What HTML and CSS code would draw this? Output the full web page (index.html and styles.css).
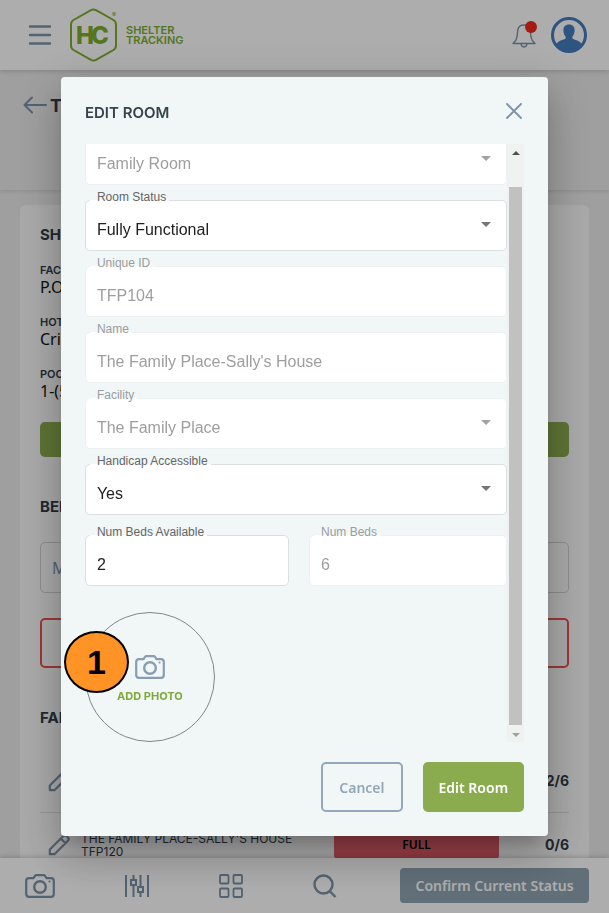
FILE: index.html
```html
<!DOCTYPE html>
<html lang="en">
<head>
<meta charset="utf-8">
<meta name="viewport" content="width=device-width, initial-scale=1">
<title>Shelter Tracking - Edit Room</title>
<link rel="stylesheet" href="styles.css">
</head>
<body>
<svg class="defs" aria-hidden="true">
  <symbol id="camera" viewBox="0 0 30 24">
    <path d="M4 4.200h4.500l1.300-2Q10.500 1.200 11.500 1.200h7q1 0 1.700 1l1.300 2H26q2.800 0 2.800 2.800v13q0 2.800-2.800 2.800H4q-2.800 0-2.800-2.800V7Q1.200 4.200 4 4.200z" fill="none" stroke="currentColor" stroke-width="2.200"/>
    <circle cx="15" cy="13" r="5.800" fill="none" stroke="currentColor" stroke-width="2.400"/>
    <circle cx="24.500" cy="7.500" r="1.100" fill="currentColor"/>
  </symbol>
  <symbol id="pencil" viewBox="0 0 24 24">
    <path d="M2 22v-5L17 2q1.500-1.300 3 0l2 2q1.300 1.500 0 3L7 22zM14 5l5 5" fill="none" stroke="currentColor" stroke-width="2.400" stroke-linejoin="round"/>
  </symbol>
</svg>

<header class="topbar">
  <button class="icon-btn menu" aria-label="Menu"><svg width="24" height="22" viewBox="0 0 24 22"><path d="M2 2.500h20M2 11h20M2 19.500h20" stroke="currentColor" stroke-width="2.400" stroke-linecap="round"/></svg></button>
  <a class="brand" href="#" aria-label="HC Shelter Tracking">
    <svg width="50" height="54" viewBox="0 0 50 54">
      <path d="M22 2.200q2.500-1.300 5 0L44.500 12q2.500 1.500 2.500 4.500v21q0 3-2.500 4.500L27 51.800q-2.500 1.300-5 0L4.500 42Q2 40.500 2 37.500v-21Q2 13.500 4.500 12z" fill="none" stroke="currentColor" stroke-width="2"/>
      <text class="mark" y="36"><tspan x="7">H</tspan><tspan x="22">C</tspan></text>
      <text class="reg" x="43" y="9">®</text>
    </svg>
    <span>SHELTER<br>TRACKING</span>
  </a>
  <button class="icon-btn bell" aria-label="Notifications">
    <svg width="26" height="28" viewBox="0 0 26 28"><path d="M2 22.500q3.500-3 4-6.500l.8-7Q7.500 4 13 4t6.200 5l.8 7q.5 3.500 4 6.500zM10 23q.5 3 3 3t3-3" fill="none" stroke="currentColor" stroke-width="1.400" stroke-linejoin="round"/></svg>
    <i class="dot"></i>
  </button>
  <button class="icon-btn avatar" aria-label="Account">
    <svg width="36" height="36" viewBox="0 0 36 36"><circle cx="18" cy="18" r="16.500" fill="none" stroke="currentColor" stroke-width="3"/><path d="M18 7.500c3.800 0 5.600 2.300 5.600 5.600 0 3-.9 5.200-2.300 6.700-.3 1.800.7 2.300 2.700 2.900 3.500 1 5.500 2 6.300 4.300L31 29Q26 35 18 35T5 29l.7-2c.8-2.300 2.800-3.300 6.300-4.300 2-.6 3-1.100 2.700-2.900-1.400-1.500-2.300-3.700-2.300-6.700 0-3.300 1.800-5.600 5.600-5.600z" fill="currentColor"/></svg>
  </button>
</header>

<section class="titlebar">
  <button class="icon-btn" aria-label="Back"><svg width="24" height="18" viewBox="0 0 24 18"><path d="M23 9H1.500M9 1.500L1.500 9 9 16.500" fill="none" stroke="currentColor" stroke-width="2" stroke-linecap="round" stroke-linejoin="round"/></svg></button>
  <h1>TFP</h1>
</section>

<main class="card">
  <h2>SHELTER</h2>
  <dl class="info">
    <dt>FACILITY</dt><dd>P.O. Box</dd>
    <dt>HOTLINE</dt><dd>Crisis</dd>
    <dt>POC</dt><dd>1-(555)</dd>
  </dl>
  <button class="wide green" aria-label="Shelter details"></button>
  <h2>BEDS</h2>
  <input class="wide outline" value="Message" aria-label="Message">
  <button class="wide red" aria-label="Clear"></button>
  <h2>FAMILY</h2>
  <div class="room">
    <svg class="pencil"><use href="#pencil"/></svg>
    <span class="room-name"></span><span></span><b>2/6</b>
  </div>
  <div class="room">
    <svg class="pencil"><use href="#pencil"/></svg>
    <span class="room-name">THE FAMILY PLACE-SALLY'S HOUSE TFP120</span>
    <span class="badge">FULL</span><b>0/6</b>
  </div>
</main>

<nav class="bottombar">
  <button class="icon-btn" aria-label="Camera"><svg width="30" height="24"><use href="#camera"/></svg></button>
  <button class="icon-btn" aria-label="Filters"><svg width="24" height="24" viewBox="0 0 24 24" fill="none" stroke="currentColor" stroke-width="2"><path d="M1 1v22M23 1v22M8.500 1v4.500M8.500 12v11M15.500 1v11.500M15.500 19v4"/><rect x="6" y="6" width="5" height="5"/><rect x="13" y="13" width="5" height="5"/></svg></button>
  <button class="icon-btn" aria-label="Grid"><svg width="24" height="24" viewBox="0 0 24 24" fill="none" stroke="currentColor" stroke-width="1.800"><rect x="1" y="1" width="8.500" height="8.500" rx="1"/><rect x="14.500" y="1" width="8.500" height="8.500" rx="1"/><rect x="1" y="14.500" width="8.500" height="8.500" rx="1"/><rect x="14.500" y="14.500" width="8.500" height="8.500" rx="1"/></svg></button>
  <button class="icon-btn" aria-label="Search"><svg width="24" height="24" viewBox="0 0 24 24" fill="none" stroke="currentColor" stroke-width="2.400"><circle cx="10.500" cy="10.500" r="9"/><path d="M16.500 17l6 6"/></svg></button>
  <button class="confirm">Confirm Current Status</button>
</nav>

<div class="overlay">
  <form class="modal" role="dialog" aria-labelledby="dlg-title">
    <div class="modal-head">
      <h2 id="dlg-title">EDIT ROOM</h2>
      <button type="button" class="icon-btn close" aria-label="Close"><svg width="16" height="16" viewBox="0 0 16 16"><path d="M1 1l14 14M15 1L1 15" stroke="currentColor" stroke-width="1.800" stroke-linecap="round"/></svg></button>
    </div>
    <div class="scroller">
      <div class="fields">
        <div class="field drop off"><select id="type" aria-label="Room Type" disabled><option>Family Room</option></select></div>
        <div class="field drop"><select id="status"><option>Fully Functional</option></select><label for="status">Room Status</label></div>
        <div class="field off"><input id="uid" value="TFP104" disabled><label for="uid">Unique ID</label></div>
        <div class="field off"><input id="name" value="The Family Place-Sally's House" disabled><label for="name">Name</label></div>
        <div class="field drop off"><select id="facility" disabled><option>The Family Place</option></select><label for="facility">Facility</label></div>
        <div class="field drop"><select id="access"><option>Yes</option></select><label for="access">Handicap Accessible</label></div>
        <div class="pair">
          <div class="field"><input id="avail" value="2"><label for="avail">Num Beds Available</label></div>
          <div class="field off"><input id="beds" value="6" disabled><label for="beds">Num Beds</label></div>
        </div>
        <button type="button" class="photo">
          <svg width="30" height="24"><use href="#camera"/></svg>
          <span>ADD PHOTO</span>
          <span class="marker">1</span>
        </button>
      </div>
      <div class="bar" aria-hidden="true"><i class="up"></i><i class="thumb"></i><i class="down"></i></div>
    </div>
    <div class="actions">
      <button type="button" class="cancel">Cancel</button>
      <button type="button" class="submit">Edit Room</button>
    </div>
  </form>
</div>
</body>
</html>
```
FILE: styles.css
```css
* { box-sizing: border-box; }
html, body { height: 100%; }
body {
  margin: 0;
  overflow: hidden;
  background: #ebebeb;
  color: #2f3b48;
  font-family: "Noto Sans", sans-serif;
}
button, input, select { font: inherit; color: inherit; margin: 0; }
button { border: 0; padding: 0; cursor: pointer; }
h1, h2, dl, dd { margin: 0; }
h1, h2, dt, .brand, .room, .photo { font-family: Inter, sans-serif; }
h2 { font-size: 15px; line-height: 20px; font-weight: 700; }
svg { display: block; }
.defs { position: absolute; width: 0; height: 0; }
.icon-btn { background: none; color: #7b92a8; flex: none; }

.topbar {
  position: relative;
  display: flex;
  align-items: center;
  height: 70px;
  padding: 0 22px 0 28px;
  background: #fff;
  box-shadow: 0 1px 5px rgba(0, 0, 0, .2);
}
.brand {
  display: flex;
  align-items: center;
  gap: 7px;
  margin: 0 auto 0 17px;
  color: #7eae2e;
  font-size: 11px;
  line-height: 10px;
  font-weight: 600;
  text-decoration: none;
}
.mark { font-size: 24px; font-weight: 800; fill: currentColor; }
.reg { font-size: 6px; fill: currentColor; }
.bell { position: relative; margin-right: 14px; }
.dot {
  position: absolute;
  top: 0;
  right: 0;
  width: 12px;
  height: 12px;
  border-radius: 50%;
  background: #f0281c;
}
.avatar { color: #447cc0; }

.titlebar {
  display: flex;
  gap: 3px;
  height: 120px;
  padding: 26px 23px 0;
  box-shadow: 0 1px 4px rgba(0, 0, 0, .12);
}
.titlebar .icon-btn { height: 18px; }
h1 { font-size: 18px; line-height: 20px; font-weight: 700; }

.card {
  margin: 15px 20px 0;
  padding: 20px;
  border-radius: 6px;
  background: #fafafa;
}
.info { margin: 15px 0 21px; }
dt { font-size: 11px; line-height: 14px; font-weight: 600; padding-top: 3px; }
dd { font-size: 16px; line-height: 20px; color: #111; margin-bottom: 15px; }
.wide { display: block; width: 100%; border-radius: 5px; background: none; }
.green { height: 35px; margin-bottom: 40px; background: #8bab4f; }
.outline {
  height: 51px;
  margin: 25px 0;
  padding: 0 11px;
  border: 1px solid #d0d0d0;
  font-size: 16px;
  color: #7b92a8;
}
.red { height: 50px; margin-bottom: 40px; border: 2px solid #e8504c; }
.room {
  display: grid;
  grid-template-columns: 41px 1fr 165px 70px;
  align-items: center;
  height: 64px;
  border-bottom: 1px solid #ddd;
}
h2 + .room { margin-top: 21px; }
.pencil { width: 22px; height: 22px; margin-left: 8px; color: #7b92a8; }
.room-name { font-size: 12px; line-height: 13px; font-weight: 400; }
.room b { font-size: 14px; text-align: right; }
.badge {
  padding: 6px;
  border-radius: 4px;
  background: #e35d68;
  color: #000;
  font: 600 12px/16px "Noto Sans", sans-serif;
  text-align: center;
}

.bottombar {
  position: fixed;
  inset: auto 0 0;
  display: flex;
  align-items: center;
  gap: 70px;
  height: 55px;
  padding: 0 20px 0 25px;
  background: #fff;
  box-shadow: 0 -1px 5px rgba(0, 0, 0, .2);
}
.confirm {
  height: 35px;
  margin-left: -7px;
  flex: 1;
  white-space: nowrap;
  border-radius: 4px;
  background: #90a4b2;
  color: #fff;
  font-size: 14px;
  font-weight: 600;
}

.overlay {
  position: fixed;
  inset: 0;
  display: flex;
  justify-content: center;
  padding: 77px 0;
  background: rgba(0, 0, 0, .32);
}
.modal {
  display: flex;
  flex-direction: column;
  width: 80%;
  padding: 24px;
  border-radius: 4px;
  background: #f1f7f7;
  box-shadow: 0 11px 15px -7px rgba(0, 0, 0, .2), 0 24px 38px 3px rgba(0, 0, 0, .14), 0 9px 46px 8px rgba(0, 0, 0, .12);
}
.modal-head { display: flex; justify-content: space-between; height: 43px; }
.modal-head h2 { line-height: 24px; font-weight: 600; color: #38444d; }
.close { height: 16px; margin: 2px 2px 0; }
.scroller { display: flex; flex: 1; min-height: 0; overflow-y: clip; }
.fields { flex: 1; display: flex; flex-direction: column; justify-content: flex-end; gap: 15px; }
.field { position: relative; flex: none; }
.field input, .field select {
  display: block;
  width: 100%;
  height: 51px;
  padding: 8px 11px 0;
  border: 1px solid #dcdfdf;
  border-radius: 5px;
  outline: 0;
  background: #fff;
  appearance: none;
  color: #212121;
  font: 16px "Liberation Sans", sans-serif;
  opacity: 1;
}
.field.off input, .field.off select { border-color: #eef1f1; color: #9e9e9e; }
.field label {
  position: absolute;
  top: -10px;
  left: 5px;
  padding: 0 3px 0 7px;
  background: linear-gradient(#f1f7f7 10px, #fff 10px);
  color: #666;
  font: 12px/15px "Liberation Sans", sans-serif;
}
.field.off label { color: #9a9d9e; }
.drop::after {
  content: "";
  position: absolute;
  top: 22px;
  right: 16px;
  border: 5px solid transparent;
  border-top-color: #757575;
  border-bottom: 0;
}
.drop.off::after { border-top-color: #a2a2a2; }
.pair { display: grid; grid-template-columns: 34fr 33fr; gap: 20px; margin: 5px 0 11px; }
.photo {
  position: relative;
  flex: none;
  display: flex;
  flex-direction: column;
  align-items: center;
  justify-content: center;
  gap: 10px;
  width: 130px;
  height: 130px;
  padding-top: 4px;
  border: 1px solid #7c868c;
  border-radius: 50%;
  background: none;
  color: #879db3;
  font-size: 11px;
  line-height: 14px;
  font-weight: 700;
}
.photo span { color: #7fa83a; }
.photo .marker {
  position: absolute;
  top: 18px;
  left: -22px;
  width: 65px;
  height: 62px;
  border: 2px solid #000;
  border-radius: 50%;
  background: #ff9326;
  color: #000;
  font: 700 34px/58px "Liberation Sans", sans-serif;
}
.bar {
  display: flex;
  flex-direction: column;
  align-items: center;
  justify-content: space-between;
  width: 17px;
  background: #f0f1f1;
}
.thumb { flex: 1; width: 13px; margin: 32px 0 8px; background: #c1c1c1; }
.up, .down { border: 4px solid transparent; }
.up { margin-top: 7px; border-top: 0; border-bottom-color: #505050; }
.down { margin-bottom: 5px; border-bottom: 0; border-top-color: #a0a0a0; }
.actions { display: flex; justify-content: flex-end; gap: 20px; margin-top: 20px; }
.actions button { height: 50px; border-radius: 5px; font-size: 14px; font-weight: 600; }
.cancel { padding: 0 16px; border: 2px solid #94a7bd; background: none; color: #94a7b7; }
.submit { padding: 0 16px; background: #8bab4f; color: #fff; }
```
